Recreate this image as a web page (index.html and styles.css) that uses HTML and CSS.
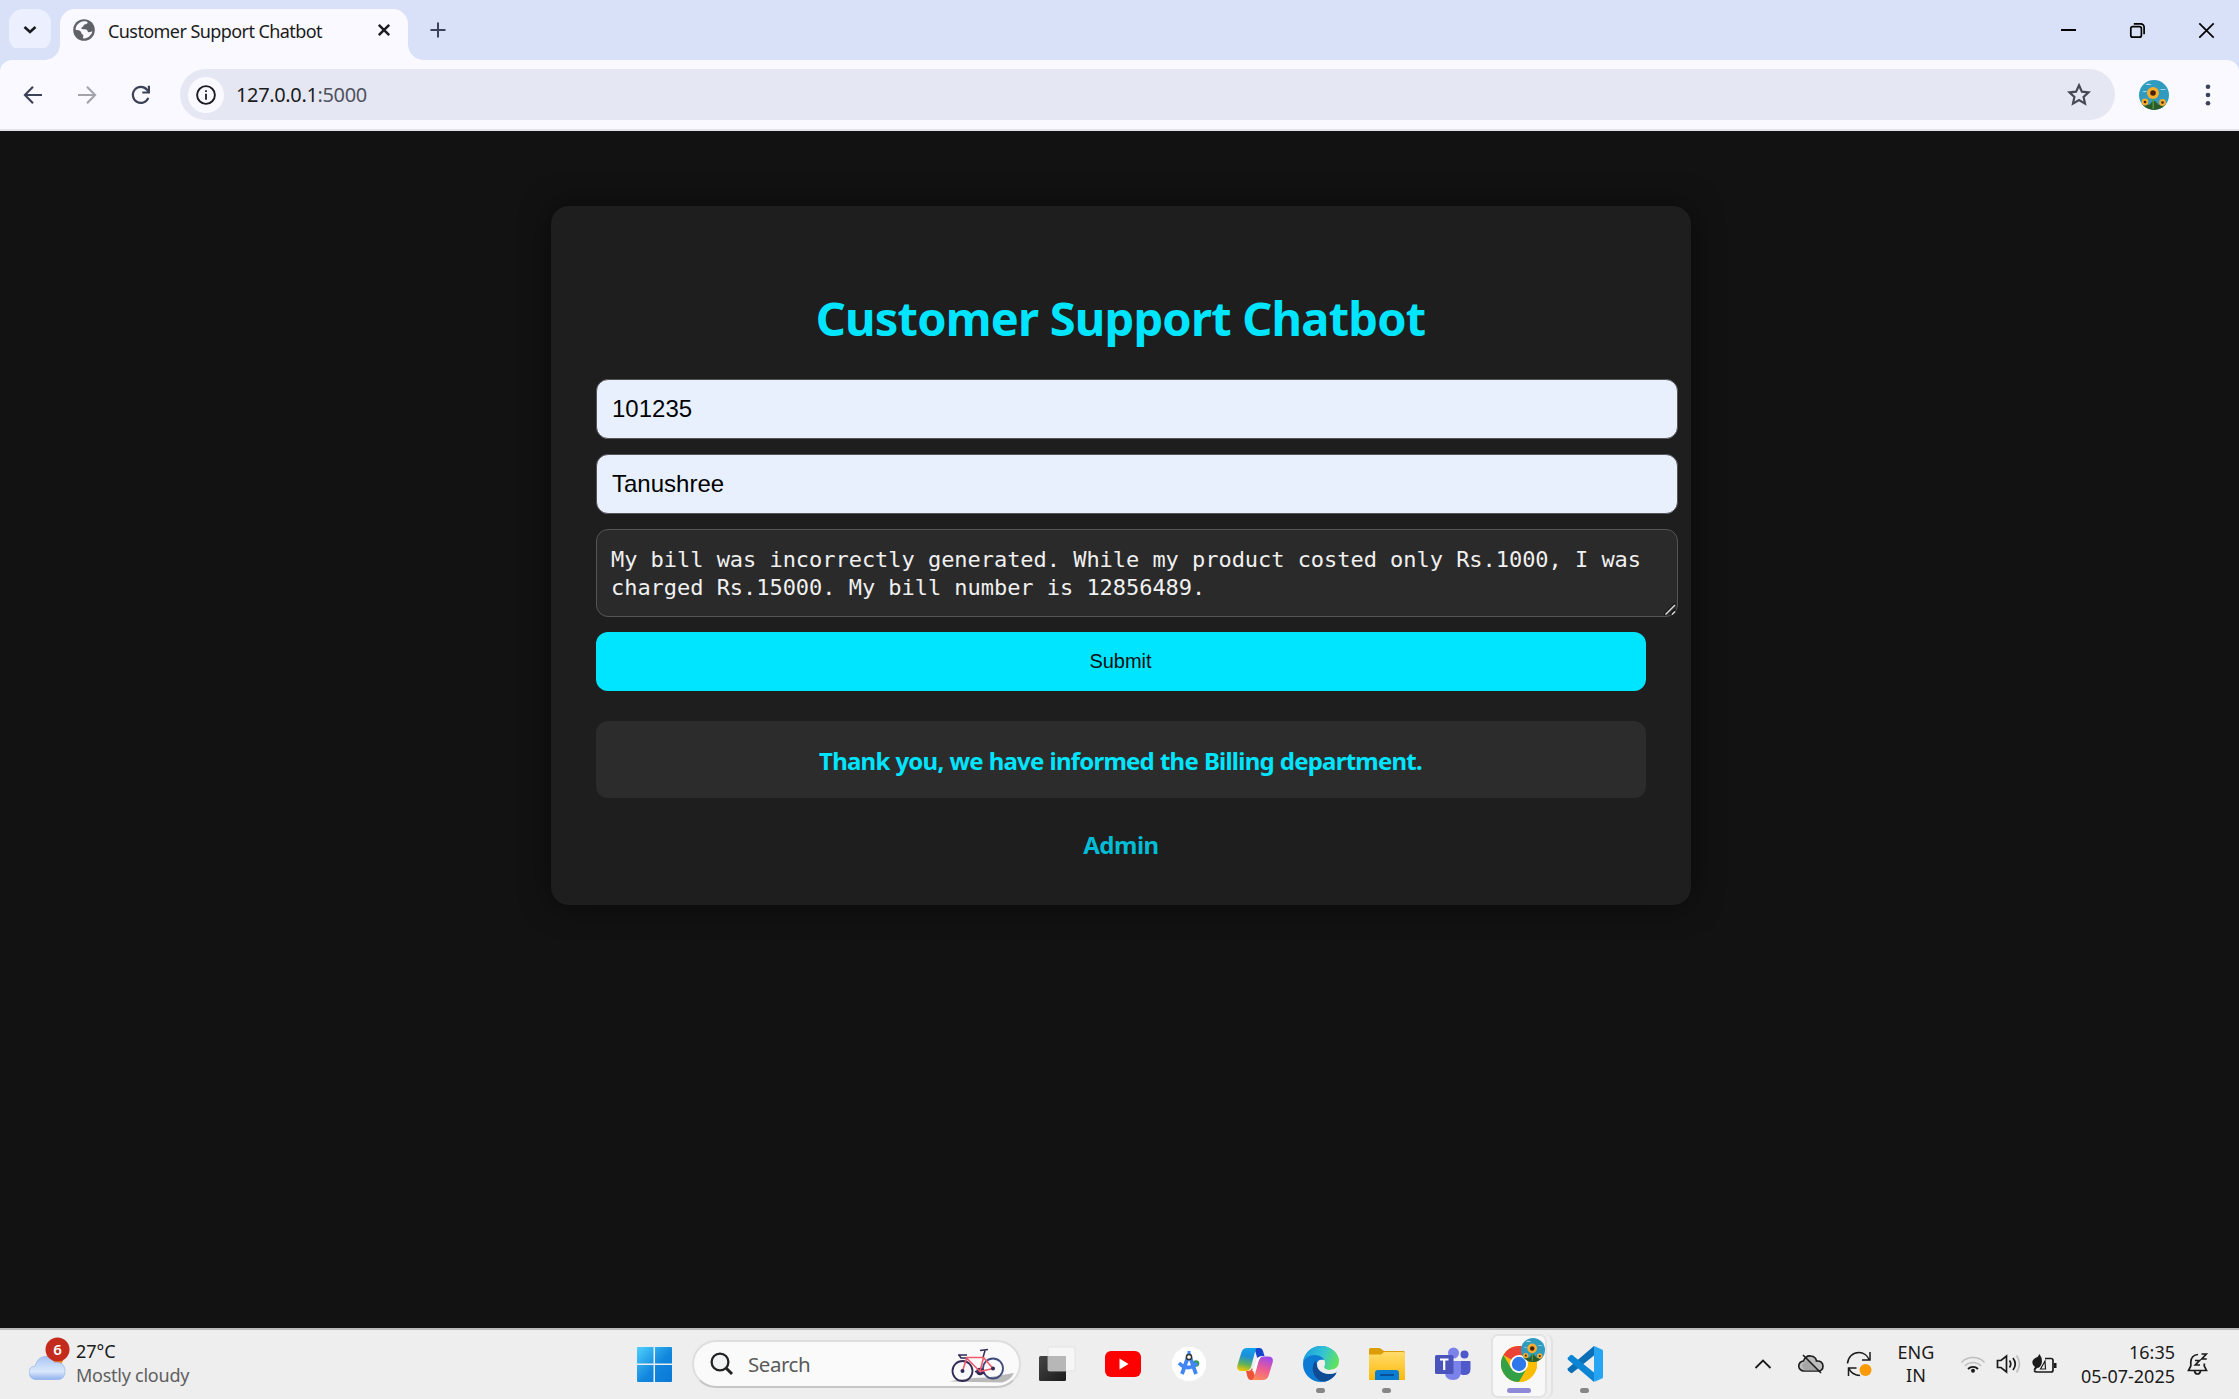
FILE: index.html
```html
<!DOCTYPE html>
<html lang="en">
<head>
<meta charset="utf-8">
<title>Customer Support Chatbot</title>
<link rel="stylesheet" href="styles.css">
</head>
<body>
<svg class="defs" width="0" height="0" aria-hidden="true">
  <defs>
    <clipPath id="round"><circle cx="15" cy="15" r="15"/></clipPath>
    <symbol id="sunflower" viewBox="0 0 30 30">
      <g clip-path="url(#round)">
        <rect width="30" height="30" fill="#2e9bbf"/>
        <path d="M6 5q3-3 7 0zM3 12q3-2 6 0zM20 10q4-2 8 0z" fill="#a9dcf3"/>
        <path d="M0 26l5-3 5 2 4-4 2 0 4 4 5-2 5 3v4H0z" fill="#2c5a2b"/>
        <path d="M13.500 17H15v12h-1.500z" fill="#4c9a36"/>
        <circle cx="14" cy="13" r="6" fill="#f8ae2c"/>
        <circle cx="14" cy="13" r="2.800" fill="#4a230f"/>
        <circle cx="6" cy="22" r="3.400" fill="#f4ad2c"/><circle cx="6" cy="22" r="1.300" fill="#4a230f"/>
        <circle cx="23.500" cy="22.500" r="3.400" fill="#f4ad2c"/><circle cx="23.500" cy="22.500" r="1.300" fill="#4a230f"/>
      </g>
    </symbol>
  </defs>
</svg>

<header class="tabstrip">
  <div class="tab-search"><svg width="14" height="10" viewBox="0 0 14 10"><path d="M1.500 2l5.500 5 5.500-5" fill="none" stroke="#1b1c20" stroke-width="2.600"/></svg></div>
  <div class="tab">
    <svg width="22" height="22" viewBox="0 0 22 22"><circle cx="11" cy="11" r="10.800" fill="#5f6368"/><path d="M9.300 2.500c2.700-.8 5 .1 5.400.8-.3 1.600-1.700 2-3.200 2.200-1.200.2-.8 2-2 2.500-1.300.5-1.700 1.500-.6 1.900 1.700.5 4.300-.2 5.400 1.400.6 1 .1 1.700 1.300 1.900 1.600.2 3-.5 3.900-.9-.9 3.600-4.200 7.100-8.500 7.100-.9 0-1.200-.7-.9-1.500.5-1.300.4-2.200-.8-2.700-1.100-.4-1-2.200-2.100-3.200-1-.9-2.700-1-4.500-1C2.400 7 5.200 3.700 9.300 2.500z" fill="#faf9ff"/></svg>
    <span class="tab-title">Customer Support Chatbot</span>
    <svg class="tab-close" width="14" height="14" viewBox="0 0 14 14"><path d="M1.800 1.800l10.400 10.400M12.200 1.800L1.800 12.200" stroke="#1b1c20" stroke-width="2.500"/></svg>
  </div>
  <div class="new-tab"><svg width="16" height="16" viewBox="0 0 16 16"><path d="M8 .5v15M.5 8h15" stroke="#3c4257" stroke-width="2"/></svg></div>
  <div class="window-controls">
    <svg width="17" height="17" viewBox="0 0 17 17"><path d="M1 8h15" stroke="#000" stroke-width="2"/></svg>
    <svg width="17" height="17" viewBox="0 0 17 17"><g fill="none" stroke="#000" stroke-width="1.700"><rect x="1.800" y="4.600" width="10.600" height="10.600" rx="2"/><path d="M4.800 1.900h7a3.300 3.300 0 0 1 3.300 3.300v7"/></g></svg>
    <svg width="17" height="17" viewBox="0 0 17 17"><path d="M1.300 1.300l14.400 14.400M15.700 1.300L1.300 15.700" stroke="#000" stroke-width="1.700"/></svg>
  </div>
</header>

<nav class="toolbar">
  <div class="tool"><svg width="20" height="20" viewBox="0 0 20 20"><path d="M19 10H2.500M10 1.800L1.900 10l8.100 8.200" fill="none" stroke="#3c4257" stroke-width="2.100"/></svg></div>
  <div class="tool"><svg width="20" height="20" viewBox="0 0 20 20"><path d="M1 10h16.500M10 1.800l8.100 8.200-8.100 8.200" fill="none" stroke="#a3a4ab" stroke-width="2.100"/></svg></div>
  <div class="tool"><svg width="20" height="20" viewBox="0 0 20 20"><path d="M17.300 12.800A8 8 0 1 1 16 4.700l1.500 1.700" fill="none" stroke="#3c4257" stroke-width="2.200"/><path d="M19 .8v7.700h-7.700V6.400h5.500V.8z" fill="#3c4257"/></svg></div>
  <div class="omnibox">
    <div class="site-info"><svg width="20" height="20" viewBox="0 0 20 20"><circle cx="10" cy="10" r="8.900" fill="none" stroke="#1b1c20" stroke-width="1.900"/><path d="M9.100 8.700h1.800v6H9.100zM9.100 5.200h1.800V7H9.100z" fill="#1b1c20"/></svg></div>
    <span class="url">127.0.0.1<span class="port">:5000</span></span>
    <svg class="star" width="24" height="24" viewBox="0 0 24 24"><path d="M12 2.300l2.900 6.300 6.700.7-5 4.600 1.400 6.700-6-3.500-6 3.500 1.400-6.700-5-4.600 6.700-.7z" fill="none" stroke="#474a55" stroke-width="2.200"/></svg>
  </div>
  <div class="tool"><svg width="30" height="30"><use href="#sunflower"/></svg></div>
  <div class="tool"><svg width="6" height="24" viewBox="0 0 6 24"><g fill="#3c4257"><circle cx="3" cy="3.700" r="2.300"/><circle cx="3" cy="12" r="2.300"/><circle cx="3" cy="20.300" r="2.300"/></g></svg></div>
</nav>

<main class="page">
  <section class="card">
    <h1 class="heading">Customer Support Chatbot</h1>
    <form class="form">
      <input class="field" type="text" value="101235">
      <input class="field" type="text" value="Tanushree">
      <div class="message-wrap">
        <textarea class="message" spellcheck="false">My bill was incorrectly generated. While my product costed only Rs.1000, I was charged Rs.15000. My bill number is 12856489.</textarea>
        <svg class="grip" width="12" height="12" viewBox="0 0 12 12"><path d="M0 11.500L11 .5M6 11.500l5-5" stroke="#111" stroke-width="1.300"/><path d="M1.500 11.500l9.500-9.500M8 11.500l3-3" stroke="#d8d8d8" stroke-width="1.500"/></svg>
      </div>
      <button class="submit" type="button">Submit</button>
    </form>
    <div class="response">Thank you, we have informed the Billing department.</div>
    <a class="admin">Admin</a>
  </section>
</main>

<footer class="taskbar">
  <div class="weather">
    <svg class="weather-icon" width="42" height="46" viewBox="0 0 42 46">
      <defs><linearGradient id="cl" x1="0" y1="0" x2="0" y2="1"><stop offset="0" stop-color="#a9c5f5"/><stop offset=".65" stop-color="#dbe8fb"/><stop offset="1" stop-color="#8fb2ee"/></linearGradient></defs>
      <circle cx="26" cy="21" r="8.500" fill="#f58a1f"/>
      <path d="M6 42.500a7 7 0 0 1-6-7c0-4 2.500-6.300 6.500-6.500C7.500 23 11.500 19.500 16.500 19.500c4.500 0 7.500 2.500 9 6 6-1.500 10.500 2.500 10.500 8.500 0 5-2.500 8.500-7 8.500z" fill="url(#cl)" stroke="#8aabe8" stroke-width=".6"/>
      <circle cx="28.500" cy="12.500" r="12" fill="#c42b1c"/>
      <text x="28.500" y="18" text-anchor="middle" class="badge-text">6</text>
    </svg>
    <div class="weather-text"><span>27°C</span><span class="cond">Mostly cloudy</span></div>
  </div>

  <div class="apps">
    <div class="app start">
      <svg width="35" height="35" viewBox="0 0 35 35"><defs><linearGradient id="win" x1="0" y1="0" x2="1" y2="1"><stop offset="0" stop-color="#4fd0fd"/><stop offset=".55" stop-color="#1187dd"/><stop offset="1" stop-color="#0a78d6"/></linearGradient></defs><path d="M1 0h15.500v16.500H0V1a1 1 0 0 1 1-1zM18 0h16a1 1 0 0 1 1 1v15.500H18zM0 18h16.500v17H1a1 1 0 0 1-1-1zM18 18h17v16a1 1 0 0 1-1 1H18z" fill="url(#win)"/></svg>
    </div>
    <div class="search">
      <svg width="24" height="24" viewBox="0 0 24 24"><circle cx="10" cy="10" r="8.400" fill="#f1f3f5" stroke="#222" stroke-width="2.300"/><path d="M16 16l6 6" stroke="#222" stroke-width="3"/></svg>
      <span class="search-label">Search</span>
      <svg class="bike" width="66" height="40" viewBox="0 0 66 40">
        <path d="M0 37.500q20-4 38-4l27-4.500q-4 8-12 9.500z" fill="#a9a9a9" opacity=".8"/>
        <g fill="none" stroke="#332a55"><circle cx="13.500" cy="27" r="10" stroke-width="1.800"/><circle cx="44" cy="24.500" r="10" stroke="#3f4a7d" stroke-width="1.800"/><path d="M9 11h9M10 11l2 3h6M31 6.500l8-1M36 6.500l-2 7" stroke-width="1.500"/><circle cx="31" cy="27.500" r="2.500" stroke-width="2.500"/><path d="M26 27.500l10 2" stroke-width="1.300"/></g>
        <path d="M13.500 27l4.500-13.500h16.500L31 27.500 18 14.500M34.500 13.500l9.500 11-13 3" fill="none" stroke="#f35b6c" stroke-width="1.600"/>
        <circle cx="13.500" cy="27" r="2" fill="#332a55"/><circle cx="44" cy="24.500" r="2" fill="#332a55"/>
      </svg>
    </div>
    <div class="app">
      <svg width="38" height="36" viewBox="0 0 38 36"><defs><linearGradient id="tv" x1="0" y1="0" x2="1" y2="1"><stop offset="0" stop-color="#454545"/><stop offset="1" stop-color="#1b1b1b"/></linearGradient></defs><rect x="1" y="10" width="27" height="25" rx="1.500" fill="url(#tv)"/><rect x="10" y="1" width="27" height="24" rx="1.500" fill="#f6f6f6" stroke="#dcdcdc" stroke-width=".7"/><path d="M10 10h18v15H10z" fill="#b7b7b7"/></svg>
    </div>
    <div class="app">
      <svg width="36" height="26" viewBox="0 0 36 26"><rect width="36" height="26" rx="6" fill="#f00"/><path d="M14.500 7.500v11l9-5.500z" fill="#fff"/></svg>
    </div>
    <div class="app">
      <svg width="36" height="36" viewBox="0 0 36 36"><circle cx="18" cy="18" r="16.300" fill="#fff" stroke="#fff" stroke-width="2" stroke-dasharray="6 2.500" stroke-linecap="round"/><circle cx="25" cy="17.500" r="3.300" fill="#3b9a50"/><path d="M18 8L11 28M18 8l7 20M8 17q9 9 18 0" fill="none" stroke="#4285f4" stroke-width="3.800"/><path d="M18 5v4" stroke="#4285f4" stroke-width="3"/><circle cx="18" cy="11" r="2.600" fill="#fff" stroke="#333" stroke-width="1.500"/></svg>
    </div>
    <div class="app">
      <svg width="36" height="36" viewBox="0 0 36 36">
        <defs><linearGradient id="cp1" x1=".5" y1="0" x2=".3" y2="1"><stop offset="0" stop-color="#13a0ee"/><stop offset=".35" stop-color="#1b8fd8"/><stop offset=".7" stop-color="#61b25a"/><stop offset="1" stop-color="#f4c700"/></linearGradient><linearGradient id="cp2" x1=".6" y1="0" x2=".3" y2="1"><stop offset="0" stop-color="#a049e8"/><stop offset=".5" stop-color="#ed5c93"/><stop offset="1" stop-color="#fd8a59"/></linearGradient></defs>
        <path d="M17 2h5.500q2.500 0 3.500 3l1.500 5h-3q-3 0-4 3l-2-7z" fill="#1744cd"/>
        <path d="M9 25h2q3 0 4-3l3 8-2 4h-2q-2.500 0-3.500-3z" fill="#ee5237"/>
        <path d="M10 2h10q-1.500 1-2 4l-4 15q-1.500 4-5 4H4.500Q-1 25 .5 19l4-13Q6 2 10 2z" fill="url(#cp1)"/>
        <path d="M26 34H13.500q3 0 4-4l4-15q1.300-4.500 5-4.500H31q6 0 4.600 6L31.500 30q-1.500 4-5.500 4z" fill="url(#cp2)"/>
        <path d="M20.500 11.500h3.300q-1.800 1.500-2.300 3.500L18.700 25H15q1.300-1.500 1.800-3.500z" fill="#fff"/>
      </svg>
    </div>
    <div class="app running">
      <svg width="36" height="36" viewBox="0 0 36 36">
        <defs><linearGradient id="e1" x1="0" y1=".3" x2="1" y2=".6"><stop offset="0" stop-color="#1b9ee0"/><stop offset=".5" stop-color="#33c3d4"/><stop offset="1" stop-color="#62e457"/></linearGradient></defs>
        <circle cx="18" cy="18" r="18" fill="#0d7bd3"/>
        <path d="M14 17a8 8 0 0 1 8-3h14v8.500Q34 27 28 27.500q-9 .5-14-10.500z" fill="#eee"/>
        <path d="M0 17C1 6.500 9 0 18 0c10 0 18 7 18 15 0 6-4 9-9.500 9-3.500 0-5.500-1.500-5.500-3 0-1 1-1.500 1-4 0-5-5-8-10.500-8C5 9 1 13 0 17z" fill="url(#e1)"/>
        <path d="M13 14.500c-5 4-4 13 1 18 3 3 7 3.300 9 2.800 5-1.500 8.500-4.500 10.700-8.700q.3-1-.7-.6C25 30 14.500 27 13.500 18z" fill="#104b94"/>
        <path d="M34 24.500q2-1.500 2-3v6l-3 1z" fill="#eee"/>
        <path d="M14 18q1-5 6-4 2 1.500 2 3 0 2-1 3.500-.5 3.300 5 3.500 4 0 7.500-2v4.500Q26 29.500 19.500 26.500 14 24 14 18z" fill="#eee"/>
      </svg>
    </div>
    <div class="app running">
      <svg width="36" height="34" viewBox="0 0 36 34"><defs><linearGradient id="fo" x1="0" y1="0" x2="0" y2="1"><stop offset="0" stop-color="#ffdc6b"/><stop offset="1" stop-color="#fcb90a"/></linearGradient></defs><path d="M0 2.500Q0 1 1.500 1H10q1.500 0 3 1.500L15 4h19.500Q36 4 36 5.500V12H0z" fill="#dc9c04"/><path d="M0 7.500h12l3-2.500h19.500Q36 5 36 6.500V33H0z" fill="url(#fo)"/><path d="M6 33v-7q0-3 3-3h18q3 0 3 3v7z" fill="#0b7ed2"/><path d="M11 28h14" stroke="#07488f" stroke-width="1.700"/></svg>
    </div>
    <div class="app">
      <svg width="36" height="34" viewBox="0 0 36 34"><circle cx="18.500" cy="6" r="5.500" fill="#7b83eb"/><circle cx="29.500" cy="7.500" r="4" fill="#5059c9"/><path d="M25 14h10q.5 0 .5 1v7q0 6-6 6-4 0-5-2z" fill="#5059c9"/><path d="M10 14h16v10q0 9-8 9t-8-8z" fill="#7b83eb"/><rect x="0" y="8" width="18.500" height="19" rx="1.500" fill="#4b53bc"/><path d="M5 12.500h8.500M9.200 12.500v10.500" stroke="#fff" stroke-width="2.200"/></svg>
    </div>
    <div class="app active">
      <svg width="36" height="36" viewBox="0 0 36 36"><circle cx="18" cy="18" r="18" fill="#fbbc04"/><path d="M18 18L2.400 9A18 18 0 0 1 33.600 9z" fill="#ea4335"/><path d="M2.400 9A18 18 0 0 0 18 36l7.800-13.500L18 18l-7.800 4.500z" fill="#34a046"/><path d="M18 9h15.600A18 18 0 0 1 18 36l7.800-13.500z" fill="#fbbc04"/><circle cx="18" cy="18" r="9" fill="#fff"/><circle cx="18" cy="18" r="7.200" fill="#2f78ec"/></svg>
      <svg class="app-avatar" width="24" height="24"><use href="#sunflower"/></svg>
    </div>
    <div class="app running">
      <svg width="36" height="36" viewBox="0 0 36 36"><path d="M1 24.500l2.500 2.300q1 .7 2 0L27 9.500V0L1 22.200q-1 1 0 2.300z" fill="#0b6fb5"/><path d="M1 11.500l2.500-2.300q1-.7 2 0L27 26.500V36L1 13.800q-1-1 0-2.300z" fill="#0c86d4"/><path d="M27 0l8 3.500q1 .5 1 1.500v26q0 1-1 1.500L27 36q1-.5 0-2z" fill="#27a4f3"/></svg>
    </div>
  </div>

  <div class="tray">
    <svg class="chev" width="18" height="12" viewBox="0 0 18 12"><path d="M1.500 10L9 2.500l7.500 7.500" fill="none" stroke="#1b1b1b" stroke-width="1.800"/></svg>
    <svg class="cloud" width="26" height="20" viewBox="0 0 26 20"><path d="M6 17a5 5 0 0 1-.5-10C7 3 10 1.500 13 2c3 .3 5 2.500 5.500 5 4-.5 6.500 2 6.500 5 0 3-2 5-5 5z" fill="#bdbdbd" stroke="#1b1b1b" stroke-width="1.600"/><path d="M6 17l-2-6 6-6 5 6 5 6z" fill="#8f8f8f" opacity=".5"/><path d="M5 1l18 18" stroke="#1b1b1b" stroke-width="1.600"/></svg>
    <svg class="sync" width="26" height="26" viewBox="0 0 26 26"><g fill="none" stroke="#1b1b1b" stroke-width="1.500"><path d="M1.500 12.500C2 6 7 1.500 13 1.500c4.500 0 8.500 3 10 7M24 1v8h-8M14 24.500c-5 0-9.500-3-11-7M2.500 25v-8h8"/></g><circle cx="19.500" cy="19" r="6" fill="#fb9a05"/></svg>
    <div class="lang"><span>ENG</span><span>IN</span></div>
    <svg class="wifi" width="26" height="18" viewBox="0 0 26 18"><g fill="none"><path d="M1.500 7.500a16 16 0 0 1 23 0M5 11a11 11 0 0 1 16 0" stroke="#bfbfbf" stroke-width="1.500"/><path d="M8 14a7 7 0 0 1 10 0" stroke="#1b1b1b" stroke-width="1.800"/></g><circle cx="13" cy="15.800" r="2" fill="#1b1b1b"/></svg>
    <svg class="vol" width="26" height="20" viewBox="0 0 26 20"><g fill="none" stroke="#1b1b1b" stroke-width="1.700"><path d="M1.500 6.500H5L10.500 2v16L5 13.500H1.500zM13.500 6.500q2.500 3.500 0 7M17 4q4.500 6 0 12"/><path d="M20.500 1.500q6 8.500 0 17" stroke="#bfbfbf"/></g></svg>
    <svg class="batt" width="26" height="20" viewBox="0 0 26 20"><path d="M13 4.500h6q2 0 2 2V16q0 2-2 2H5q-2 0-3-1.500" fill="none" stroke="#1b1b1b" stroke-width="1.700"/><path d="M22 9h2.500v5H22z" fill="#1b1b1b"/><path d="M7.500 0Q11 5 9.500 10q-1.500 4-4.500 4l-2 2.500-1.500-1L3 13Q-1 10 1 6q2-2.500 4.500-3z" fill="#1b1b1b"/><path d="M8.500 15l4.500-8 .5 8z" fill="none" stroke="#1b1b1b" stroke-width="1.200"/></svg>
    <div class="clock"><span>16:35</span><span>05-07-2025</span></div>
    <svg class="bell" width="22" height="24" viewBox="0 0 22 24"><g fill="none" stroke="#1b1b1b" stroke-width="1.700"><path d="M11 2.500C6.500 2.500 3.800 6 3.800 10v4L1.500 18.500h18L17.300 14v-2.500M7.500 19q.5 3 3 3t3-3"/><path d="M8 8.500h4.500L8.300 13h4.700M14.500 2h4.800l-4.500 5h5"/></g></svg>
  </div>
</footer>
</body>
</html>
```
FILE: styles.css
```css
* { box-sizing: border-box; }

body {
  margin: 0;
  width: 2239px;
  height: 1399px;
  display: flex;
  flex-direction: column;
  overflow: hidden;
  background: #121212;
  font-family: "Noto Sans", "Open Sans", sans-serif;
}
svg { display: block; flex: none; }
.defs { position: absolute; }

/* Tab strip */
.tabstrip { flex: none; height: 60px; display: flex; align-items: flex-end; background: #d9e1f9; }
.tab-search {
  width: 42px; height: 42px; margin: 0 9px 9px; border-radius: 14px; background: #ebeffe;
  display: flex; align-items: center; justify-content: center;
}
.tab {
  position: relative; width: 348px; height: 51px; padding: 0 17px 9px 13px;
  display: flex; align-items: center; border-radius: 15px 15px 0 0; background: #faf9ff;
}
.tab::before, .tab::after {
  content: ""; position: absolute; bottom: 0; width: 15px; height: 15px;
}
.tab::before { left: -15px; background: radial-gradient(circle at 0 0, transparent 14.5px, #faf9ff 15px); }
.tab::after { right: -15px; background: radial-gradient(circle at 100% 0, transparent 14.5px, #faf9ff 15px); }
.tab-title { margin-left: 13px; padding-top: 2px; font-size: 18px; line-height: 24px; letter-spacing: -.58px; color: #1b1c20; white-space: nowrap; }
.tab-close { margin-left: auto; }
.new-tab { width: 60px; height: 60px; display: flex; align-items: center; justify-content: center; }
.window-controls { height: 60px; margin: 0 24px 0 auto; display: flex; align-items: center; gap: 52px; }

/* Toolbar */
.toolbar {
  flex: none; height: 71px; padding: 0 4px 0 6px; display: flex; align-items: center;
  background: #faf9ff; border-bottom: 2px solid #e3e4ea; border-radius: 12px 12px 0 0;
  box-shadow: 0 -12px 0 #d9e1f9;
}
.tool { width: 54px; height: 54px; display: flex; align-items: center; justify-content: center; }
.omnibox {
  flex: 1; height: 51px; margin: 0 12px; padding: 0 24px 0 8px; border-radius: 26px; background: #e5e8f3;
  display: flex; align-items: center;
}
.site-info { width: 36px; height: 36px; border-radius: 50%; background: #faf9ff; display: flex; align-items: center; justify-content: center; }
.url { margin-left: 12px; font-size: 20px; letter-spacing: -.36px; color: #1b1c20; }
.port { color: #50525c; }
.star { margin-left: auto; }

/* Page */
.page { flex: 1; display: flex; justify-content: center; align-items: flex-start; padding: 75px 0 0 3px; background: #121212; }
.card {
  width: 1140px; height: 699px; padding: 45px; border-radius: 18px; background: #1e1e1e;
  box-shadow: 0 0 30px rgba(0, 0, 0, .5); text-align: center;
}
.heading {
  margin: 35px 0 29px; padding-right: 1px; font-size: 47px; line-height: 64px; font-weight: 700;
  letter-spacing: -.8px; color: #00e5ff; white-space: nowrap;
}
.form { display: flex; flex-direction: column; align-items: flex-start; }
.field {
  width: 1082px; height: 60px; margin-bottom: 15px; padding: 0 15px; border: 1px solid #555; border-radius: 12px;
  background: #e8f0fe; color: #000; font-family: "Liberation Sans", Arial, sans-serif; font-size: 24px; outline: 0;
}
.message-wrap { position: relative; width: 1082px; height: 88px; margin-bottom: 15px; }
.message {
  display: block; width: 100%; height: 100%; padding: 16px 15px 14px 14px; border: 1px solid #555; border-radius: 12px;
  background: #2a2a2a; color: #f0f0f0; font-family: "DejaVu Sans Mono", monospace; font-size: 22px;
  line-height: 28px; letter-spacing: -.04px; resize: none; overflow: hidden; outline: 0;
}
.grip { position: absolute; right: 2px; bottom: 2px; }
.submit {
  width: 100%; height: 59px; padding: 0 7px 0 6px; border: 0; border-radius: 12px; background: #00e5ff; color: #111;
  font-family: "Liberation Sans", Arial, sans-serif; font-size: 20px;
}
.response {
  height: 77px; margin: 30px 0; padding: 23px 1px 0 0; border-radius: 12px; background: #2c2c2c; color: #00e5ff;
  font-size: 24px; line-height: 33px; font-weight: 700; letter-spacing: -.78px; word-spacing: .5px;
}
.admin { display: block; color: #00bcd4; font-size: 24px; line-height: 33px; font-weight: 700; letter-spacing: -.5px; }

/* Taskbar */
.taskbar {
  flex: none; height: 71px; border-top: 2px solid #bbb; background: #eee; color: #1b1b1b;
  display: grid; grid-template-columns: 621px 1fr auto; font-size: 18px; line-height: 24px;
}
.weather { display: flex; align-items: flex-start; padding: 7px 0 0 29px; }
.weather-icon { margin-right: 5px; }
.badge-text { font-size: 15px; font-weight: 600; fill: #fff; }
.weather-text { display: flex; flex-direction: column; align-items: flex-start; padding-top: 2px; }
.cond { color: #5f5f5f; letter-spacing: -.25px; }
.apps { display: flex; align-items: center; padding-bottom: 1px; }
.app { position: relative; width: 66px; height: 68px; display: flex; align-items: center; justify-content: center; }
.search {
  width: 329px; height: 48px; margin: 0 3px 0 5px; padding: 0 8px 0 16px; border: 2px solid #dedede; border-bottom-color: #c6c6c6;
  border-radius: 24px; background: #fafafa; display: flex; align-items: center;
}
.search-label { margin-left: 14px; font-size: 20.5px; letter-spacing: -.45px; color: #5a5a5a; }
.bike { margin-left: auto; margin-right: -4px; }
.running::after, .active::after {
  content: ""; position: absolute; left: 28px; top: 58px; width: 9px; height: 5px; border-radius: 3px; background: #868686;
}
.active::after { left: 21px; width: 24px; background: #8e8ad8; }
.active::before {
  content: ""; position: absolute; left: 5px; top: 4px; width: 52px; height: 60px; border: 2px solid #e3e3e3;
  border-radius: 7px; background: #f8f8f8; box-shadow: 4px 0 0 #f0f0f0, 6px 0 0 #e2e2e2;
}
.active svg { position: relative; }
.active .app-avatar { position: absolute; left: 35px; top: 8px; }
.tray { display: flex; align-items: center; padding: 0 30px 1px 0; }
.cloud { margin-left: 26px; }
.sync { margin-left: 22px; }
.lang { width: 50px; margin-left: 19px; display: flex; flex-direction: column; align-items: center; line-height: 23px; }
.wifi { margin-left: 19px; }
.vol { margin-left: 10px; }
.batt { margin-left: 10px; }
.clock { width: 110px; margin-left: 7px; display: flex; flex-direction: column; align-items: flex-end; }
.bell { margin-left: 12px; }
```
